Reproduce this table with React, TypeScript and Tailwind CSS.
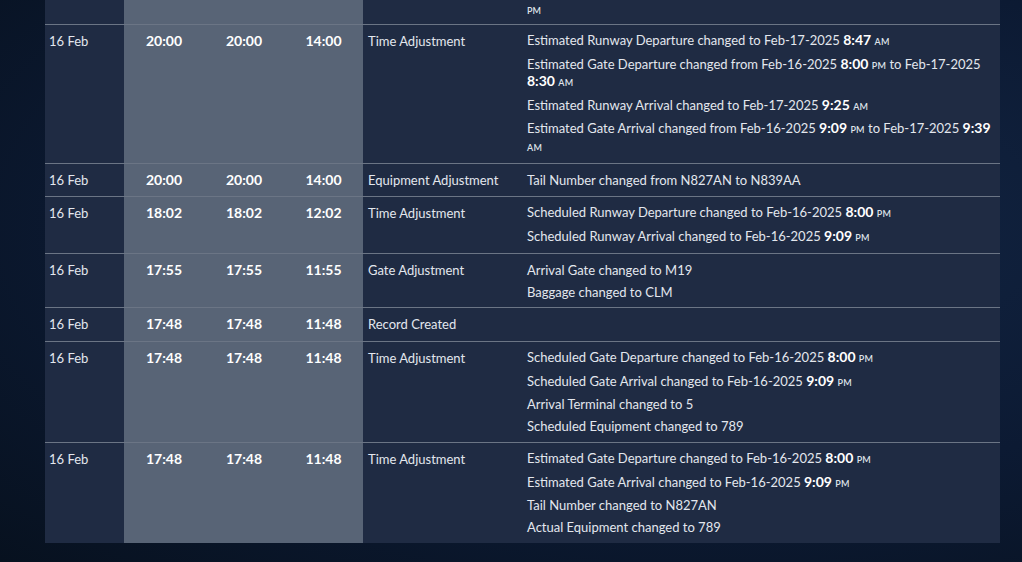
import React from "react";

type Part = { t: string; b?: string; ap?: string };
type Change = Part[];

interface Row {
  date: string;
  t1: string;
  t2: string;
  t3: string;
  kind: string;
  changes: Change[];
}

const rows: Row[] = [
  {
    date: "16 Feb",
    t1: "20:00",
    t2: "20:00",
    t3: "14:00",
    kind: "Time Adjustment",
    changes: [
      [{ t: "Estimated Runway Departure changed to Feb-17-2025 ", b: "8:47", ap: "AM" }],
      [
        { t: "Estimated Gate Departure changed from Feb-16-2025 ", b: "8:00", ap: "PM" },
        { t: " to Feb-17-2025 ", b: "8:30", ap: "AM" },
      ],
      [{ t: "Estimated Runway Arrival changed to Feb-17-2025 ", b: "9:25", ap: "AM" }],
      [
        { t: "Estimated Gate Arrival changed from Feb-16-2025 ", b: "9:09", ap: "PM" },
        { t: " to Feb-17-2025 ", b: "9:39", ap: "AM" },
      ],
    ],
  },
  {
    date: "16 Feb",
    t1: "20:00",
    t2: "20:00",
    t3: "14:00",
    kind: "Equipment Adjustment",
    changes: [[{ t: "Tail Number changed from N827AN to N839AA" }]],
  },
  {
    date: "16 Feb",
    t1: "18:02",
    t2: "18:02",
    t3: "12:02",
    kind: "Time Adjustment",
    changes: [
      [{ t: "Scheduled Runway Departure changed to Feb-16-2025 ", b: "8:00", ap: "PM" }],
      [{ t: "Scheduled Runway Arrival changed to Feb-16-2025 ", b: "9:09", ap: "PM" }],
    ],
  },
  {
    date: "16 Feb",
    t1: "17:55",
    t2: "17:55",
    t3: "11:55",
    kind: "Gate Adjustment",
    changes: [[{ t: "Arrival Gate changed to M19" }], [{ t: "Baggage changed to CLM" }]],
  },
  {
    date: "16 Feb",
    t1: "17:48",
    t2: "17:48",
    t3: "11:48",
    kind: "Record Created",
    changes: [],
  },
  {
    date: "16 Feb",
    t1: "17:48",
    t2: "17:48",
    t3: "11:48",
    kind: "Time Adjustment",
    changes: [
      [{ t: "Scheduled Gate Departure changed to Feb-16-2025 ", b: "8:00", ap: "PM" }],
      [{ t: "Scheduled Gate Arrival changed to Feb-16-2025 ", b: "9:09", ap: "PM" }],
      [{ t: "Arrival Terminal changed to 5" }],
      [{ t: "Scheduled Equipment changed to 789" }],
    ],
  },
  {
    date: "16 Feb",
    t1: "17:48",
    t2: "17:48",
    t3: "11:48",
    kind: "Time Adjustment",
    changes: [
      [{ t: "Estimated Gate Departure changed to Feb-16-2025 ", b: "8:00", ap: "PM" }],
      [{ t: "Estimated Gate Arrival changed to Feb-16-2025 ", b: "9:09", ap: "PM" }],
      [{ t: "Tail Number changed to N827AN" }],
      [{ t: "Actual Equipment changed to 789" }],
    ],
  },
];

function ChangeLine({ parts }: { parts: Change }) {
  const hasTime = parts.some((p) => p.b);
  return (
    <div className={`${hasTime ? "leading-[17.5px]" : "leading-[16px]"} mb-[6px] last:mb-0`}>
      {parts.map((p, i) => (
        <React.Fragment key={i}>
          {p.t}
          {p.b && <span className="font-bold text-[14px] leading-none text-white">{p.b}</span>}
          {p.ap && (
            <>
              {" "}
              <span className="text-[9px] leading-none font-semibold tracking-[0.2px] text-[#dfe3ea]">{p.ap}</span>
            </>
          )}
        </React.Fragment>
      ))}
    </div>
  );
}

function TableRow({ row }: { row: Row }) {
  const cell = "bg-[#1f2b43] pt-[7px] pb-[7px]";
  const time = "bg-[#586476] pt-[7px] pb-[7px] text-center font-bold text-[14px] leading-[18px] text-white";
  const timed = row.changes.some((c) => c.some((p) => p.b));
  return (
    <div className="grid grid-cols-[79px_80px_80px_79px_160px_1fr] border-t border-[#6b7585]">
      <div className={`${cell} pl-[4px] leading-[18px]`}>{row.date}</div>
      <div className={time}>{row.t1}</div>
      <div className={time}>{row.t2}</div>
      <div className={time}>{row.t3}</div>
      <div className={`${cell} pl-[5px] leading-[18px]`}>{row.kind}</div>
      <div className={`bg-[#1f2b43] pl-[4px] ${timed ? "pt-[7px] pb-[8px]" : "pt-[8px] pb-[7px]"}`}>
        {row.changes.length === 0 ? (
          <div className="h-[18px]" />
        ) : (
          row.changes.map((c, i) => <ChangeLine key={i} parts={c} />)
        )}
      </div>
    </div>
  );
}

export default function App() {
  return (
    <div className="w-[1022px] h-[562px] overflow-hidden bg-[radial-gradient(ellipse_at_70%_40%,#132644_0%,#0c1a33_55%,#07111f_100%)] font-['Lato','Liberation_Sans',sans-serif] text-[13px] text-[#e3e7ee]">
      <div className="mx-[45px] w-[955px]">
        {/* tail of the previous record, scrolled off the top */}
        <div className="grid grid-cols-[79px_80px_80px_79px_160px_1fr] h-[24px]">
          <div className="bg-[#1f2b43]" />
          <div className="bg-[#586476]" />
          <div className="bg-[#586476]" />
          <div className="bg-[#586476]" />
          <div className="bg-[#1f2b43]" />
          <div className="bg-[#1f2b43] pl-[4px] pt-[3px] leading-[12px]">
            <span className="text-[9px] font-semibold text-[#dfe3ea]">PM</span>
          </div>
        </div>
        {rows.map((r, i) => (
          <TableRow key={i} row={r} />
        ))}
      </div>
    </div>
  );
}
